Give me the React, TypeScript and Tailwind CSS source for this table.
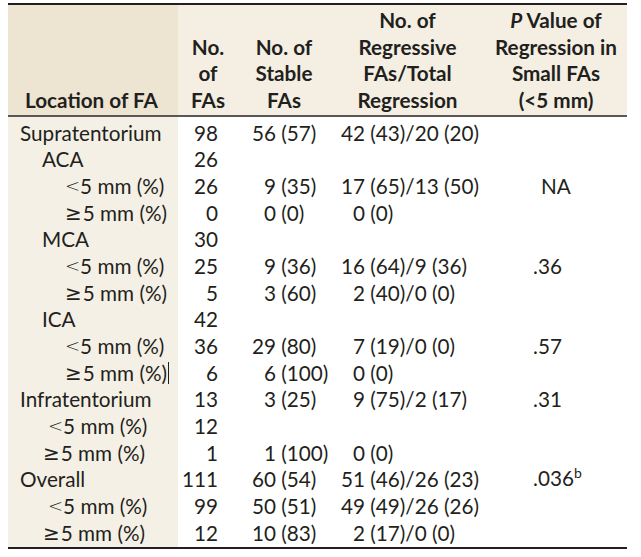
import React from 'react';

type Row = {
  label: string;
  pad: string;
  sym?: 'lt' | 'ge';
  n?: string;
  stable?: [string, string];
  regr?: [string, string];
  p?: React.ReactNode;
  cursor?: boolean;
};

const rows: Row[] = [
  { label: 'Supratentorium', pad: 'pl-[12px]', n: '98', stable: ['56', ' (57)'], regr: ['42', ' (43)/20 (20)'] },
  { label: 'ACA', pad: 'pl-[34px]', n: '26' },
  { sym: 'lt', label: '5 mm (%)', pad: 'pl-[57px]', n: '26', stable: ['9', ' (35)'], regr: ['17', ' (65)/13 (50)'], p: <span className="ml-[8px]">NA</span> },
  { sym: 'ge', label: '5 mm (%)', pad: 'pl-[57px]', n: '0', stable: ['0', ' (0)'], regr: ['0', ' (0)'] },
  { label: 'MCA', pad: 'pl-[34px]', n: '30' },
  { sym: 'lt', label: '5 mm (%)', pad: 'pl-[57px]', n: '25', stable: ['9', ' (36)'], regr: ['16', ' (64)/9 (36)'], p: '.36' },
  { sym: 'ge', label: '5 mm (%)', pad: 'pl-[57px]', n: '5', stable: ['3', ' (60)'], regr: ['2', ' (40)/0 (0)'] },
  { label: 'ICA', pad: 'pl-[34px]', n: '42' },
  { sym: 'lt', label: '5 mm (%)', pad: 'pl-[57px]', n: '36', stable: ['29', ' (80)'], regr: ['7', ' (19)/0 (0)'], p: '.57' },
  { sym: 'ge', label: '5 mm (%)', pad: 'pl-[57px]', n: '6', stable: ['6', ' (100)'], regr: ['0', ' (0)'], cursor: true },
  { label: 'Infratentorium', pad: 'pl-[12px]', n: '13', stable: ['3', ' (25)'], regr: ['9', ' (75)/2 (17)'], p: '.31' },
  { sym: 'lt', label: '5 mm (%)', pad: 'pl-[40px]', n: '12' },
  { sym: 'ge', label: '5 mm (%)', pad: 'pl-[35px]', n: '1', stable: ['1', ' (100)'], regr: ['0', ' (0)'] },
  {
    label: 'Overall', pad: 'pl-[12px]', n: '111', stable: ['60', ' (54)'], regr: ['51', ' (46)/26 (23)'],
    p: <>.036<span className="text-[14px] relative -top-[8px]">b</span></>,
  },
  { sym: 'lt', label: '5 mm (%)', pad: 'pl-[40px]', n: '99', stable: ['50', ' (51)'], regr: ['49', ' (49)/26 (26)'] },
  { sym: 'ge', label: '5 mm (%)', pad: 'pl-[35px]', n: '12', stable: ['10', ' (83)'], regr: ['2', ' (17)/0 (0)'] },
];

function Label({ r }: { r: Row }) {
  if (r.sym === 'lt')
    return (
      <>
        <span className="font-['DejaVu_Sans',sans-serif] font-light text-[18px]">&lt;</span>
        {r.label}
      </>
    );
  if (r.sym === 'ge')
    return (
      <>
        <span className="font-['DejaVu_Sans',sans-serif] text-[20px] mr-[1px]">≥</span>
        {r.label}
      </>
    );
  return <>{r.label}</>;
}

export default function App() {
  return (
    <div className="bg-white w-[641px] h-[557px] pt-[3px] pl-[8px] text-[#231f20] font-['Lato','Noto_Sans',sans-serif]">
      <div className="w-[619px] border-t-2 border-[#231f20]">
        {/* header */}
        <div className="flex border-b-2 border-[#5a5655] text-[20.7px] font-bold leading-[26.67px]">
          <div className="w-[170px] bg-[#ede5d1] flex items-end pl-[17px] pb-[1px] pt-[2px]">Location of FA</div>
          <div className="flex-1 flex bg-[#f4efe2] items-end pb-[1px] pt-[2px]">
            <div className="w-[60px] text-center">No.<br />of<br />FAs</div>
            <div className="w-[92px] text-center">No. of<br />Stable<br />FAs</div>
            <div className="w-[155px] text-center">No. of<br />Regressive<br />FAs/Total<br />Regression</div>
            <div className="w-[142px] text-center"><i>P</i> Value of<br />Regression in<br />Small FAs<br />(&lt;5 mm)</div>
          </div>
        </div>
        {/* body */}
        <div className="flex border-b-2 border-[#231f20] text-[20.7px] leading-[26.67px]">
          <div className="w-[170px] bg-[#f4f0e5] pt-[3px] pb-[1px]">
            {rows.map((r, i) => (
              <div key={i} className={`h-[26.67px] whitespace-pre flex items-center ${r.pad}`}>
                <Label r={r} />
                {r.cursor && <span className="inline-block w-[1px] h-[22px] bg-[#231f20] ml-[1px]" />}
              </div>
            ))}
          </div>
          <div className="flex-1 pt-[3px] pb-[1px]">
            {rows.map((r, i) => (
              <div key={i} className="h-[26.67px] flex items-center whitespace-pre">
                <div className="w-[60px] text-right pr-[20px]">{r.n}</div>
                <div className="w-[92px] flex">
                  {r.stable && (
                    <>
                      <span className="w-[38px] text-right">{r.stable[0]}</span>
                      <span>{r.stable[1]}</span>
                    </>
                  )}
                </div>
                <div className="w-[155px] flex">
                  {r.regr && (
                    <>
                      <span className="w-[35px] text-right">{r.regr[0]}</span>
                      <span>{r.regr[1]}</span>
                    </>
                  )}
                </div>
                <div className="w-[142px] pl-[48px]">{r.p}</div>
              </div>
            ))}
          </div>
        </div>
      </div>
    </div>
  );
}
